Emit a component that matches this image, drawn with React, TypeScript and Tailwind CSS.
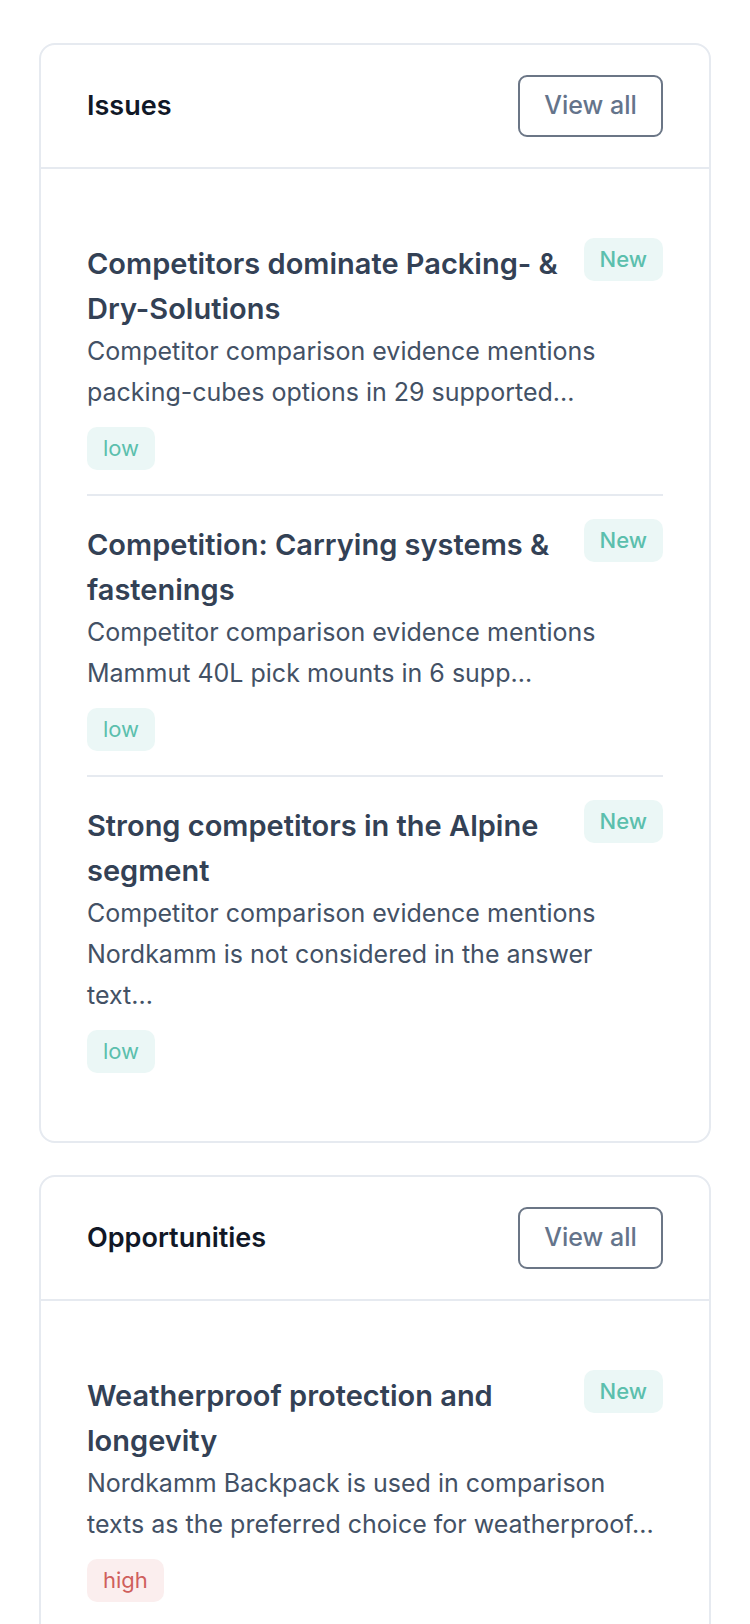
type Severity = "low" | "high";

interface Item {
  title: string;
  description: string;
  severity: Severity;
}

const issues: Item[] = [
  {
    title: "Competitors dominate Packing- & Dry-Solutions",
    description: "Competitor comparison evidence mentions packing-cubes options in 29 supported...",
    severity: "low",
  },
  {
    title: "Competition: Carrying systems & fastenings",
    description: "Competitor comparison evidence mentions Mammut 40L pick mounts in 6 supp...",
    severity: "low",
  },
  {
    title: "Strong competitors in the Alpine segment",
    description: "Competitor comparison evidence mentions Nordkamm is not considered in the answer text...",
    severity: "low",
  },
];

const opportunities: Item[] = [
  {
    title: "Weatherproof protection and longevity",
    description:
      "Nordkamm Backpack is used in comparison texts as the preferred choice for weatherproof...",
    severity: "high",
  },
];

function SeverityTag({ severity }: { severity: Severity }) {
  const cls =
    severity === "high"
      ? "bg-[#fbeeee] text-[#cf5f5c]"
      : "bg-[#ebf7f6] text-[#5bbfad]";
  return (
    <span className={`inline-flex h-[43px] items-center rounded-[10px] px-4 text-[22px] ${cls}`}>
      {severity}
    </span>
  );
}

function Row({ item }: { item: Item }) {
  return (
    <div className="pt-[26px] pb-[24px]">
      <div className="flex items-start justify-between gap-6">
        <div className="text-[29px] font-semibold leading-[45px] text-[#334155]">{item.title}</div>
        <span className="mt-[-3px] inline-flex h-[43px] shrink-0 items-center rounded-[10px] bg-[#ebf7f6] px-4 text-[22px] font-medium text-[#5bbfad]">
          New
        </span>
      </div>
      <p className="text-[25px] leading-[41px] text-[#435165]">{item.description}</p>
      <div className="mt-[14px] flex">
        <SeverityTag severity={item.severity} />
      </div>
    </div>
  );
}

function Panel({ title, items }: { title: string; items: Item[] }) {
  return (
    <section className="rounded-2xl border-2 border-[#e6eaf0] bg-white">
      <div className="flex items-center justify-between border-b-2 border-[#e6eaf0] px-[46px] py-[30px]">
        <h2 className="text-[27px] font-semibold text-[#111827]">{title}</h2>
        <button className="h-[62px] w-[145px] rounded-[9px] border-2 border-[#6b7686] text-[25px] font-medium text-[#64748b]">
          View all
        </button>
      </div>
      <div className="divide-y-2 divide-[#e6eaf0] px-[46px] pt-[46px] pb-[44px]">
        {items.map((it) => (
          <Row key={it.title} item={it} />
        ))}
      </div>
    </section>
  );
}

export default function App() {
  return (
    <div className="min-h-screen bg-white px-[39px] pt-[43px] font-['Inter',sans-serif]">
      <div className="flex flex-col gap-8">
        <Panel title="Issues" items={issues} />
        <Panel title="Opportunities" items={opportunities} />
      </div>
    </div>
  );
}
